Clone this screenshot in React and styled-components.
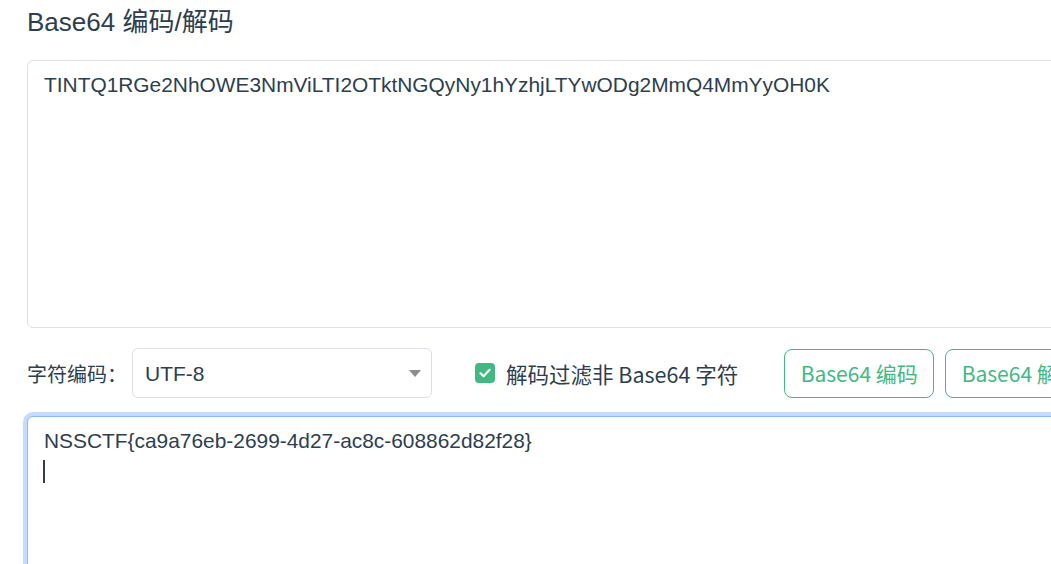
import React, { useState } from "react";
import styled, { createGlobalStyle } from "styled-components";

const GlobalStyle = createGlobalStyle`
  html, body {
    margin: 0;
    padding: 0;
    background: #ffffff;
    overflow: hidden;
  }
  body {
    font-family: "Liberation Sans", Arial, "Noto Sans CJK SC", sans-serif;
    color: #2c3e50;
  }
`;

const INPUT =
  "TINTQ1RGe2NhOWE3NmViLTI2OTktNGQyNy1hYzhjLTYwODg2MmQ4MmYyOH0K";
const OUTPUT = "NSSCTF{ca9a76eb-2699-4d27-ac8c-608862d82f28}\n";

const App = () => {
  const [input, setInput] = useState(INPUT);
  const [output, setOutput] = useState(OUTPUT);
  const [charset, setCharset] = useState("UTF-8");
  const [strict, setStrict] = useState(true);

  return (
    <>
      <GlobalStyle />
      <Page>
        <Title>Base64 编码/解码</Title>
        <TextBox
          value={input}
          onChange={(e) => setInput(e.target.value)}
          spellCheck={false}
        />
        <Toolbar>
          <FieldLabel>字符编码：</FieldLabel>
          <SelectWrap>
            <Select value={charset} onChange={(e) => setCharset(e.target.value)}>
              <option>UTF-8</option>
              <option>GBK</option>
              <option>ISO-8859-1</option>
            </Select>
            <Arrow width="12" height="7" viewBox="0 0 12 7">
              <path d="M0 0h12L6 7z" fill="#8c8c8c" />
            </Arrow>
          </SelectWrap>
          <CheckLabel onClick={() => setStrict(!strict)}>
            <CheckBox $checked={strict}>
              {strict && (
                <svg width="12" height="10" viewBox="0 0 12 10">
                  <path
                    d="M1.5 5.2 4.6 8.2 10.5 1.8"
                    fill="none"
                    stroke="#fff"
                    strokeWidth="2.2"
                    strokeLinecap="round"
                    strokeLinejoin="round"
                  />
                </svg>
              )}
            </CheckBox>
            解码过滤非 Base64 字符
          </CheckLabel>
          <Buttons>
            <OutlineButton>Base64 编码</OutlineButton>
            <OutlineButton>Base64 解码</OutlineButton>
          </Buttons>
        </Toolbar>
        <OutputWrap>
          <TextBox
            $active
            value={output}
            onChange={(e) => setOutput(e.target.value)}
            spellCheck={false}
          />
          {/* caret shown at the end of the focused output */}
          <Caret />
        </OutputWrap>
      </Page>
    </>
  );
};

export default App;

const Page = styled.div`
  width: 1180px;
  padding: 4px 0 0 27px;
  box-sizing: border-box;
`;

const Title = styled.h2`
  margin: 0 0 20px;
  font-size: 26px;
  font-weight: normal;
  line-height: 36px;
  color: #2c3e50;
`;

const TextBox = styled.textarea`
  display: block;
  width: 100%;
  height: 268px;
  box-sizing: border-box;
  margin: 0;
  padding: 8px 16px;
  resize: none;
  font-family: "Liberation Sans", Arial, sans-serif;
  font-size: 20.9px;
  line-height: 31.5px;
  color: #2c3e50;
  background: #fff;
  border: 1px solid ${(p) => (p.$active ? "#8fb8f6" : "#dcdfe6")};
  border-radius: 6px;
  box-shadow: ${(p) => (p.$active ? "0 0 0 4px #c4dbfd" : "none")};
  outline: none;
  caret-color: transparent;
`;

const OutputWrap = styled.div`
  position: relative;
`;

const Caret = styled.span`
  position: absolute;
  left: 16px;
  top: 44px;
  width: 2px;
  height: 23px;
  background: #2c3e50;
`;

const Toolbar = styled.div`
  display: flex;
  align-items: center;
  margin: 20px 0 18px;
  white-space: nowrap;
`;

const FieldLabel = styled.span`
  font-family: "Noto Sans CJK SC", sans-serif;
  font-size: 20px;
  width: 105px;
  color: #2c3e50;
`;

const SelectWrap = styled.div`
  position: relative;
  width: 300px;
  height: 50px;
`;

const Select = styled.select`
  appearance: none;
  width: 100%;
  height: 100%;
  box-sizing: border-box;
  padding: 0 12px;
  font-family: "Liberation Sans", Arial, sans-serif;
  font-size: 21px;
  color: #2c3e50;
  background: #fff;
  border: 1px solid #dcdfe6;
  border-radius: 6px;
  outline: none;
`;

const Arrow = styled.svg`
  position: absolute;
  right: 11px;
  top: 22px;
  pointer-events: none;
`;

const CheckLabel = styled.label`
  display: flex;
  align-items: center;
  gap: 11px;
  margin-left: 43px;
  font-family: "Noto Sans CJK SC", sans-serif;
  font-size: 21.5px;
  color: #2c3e50;
  cursor: pointer;
`;

const CheckBox = styled.span`
  display: inline-flex;
  align-items: center;
  justify-content: center;
  width: 20px;
  height: 20px;
  border-radius: 4px;
  box-sizing: border-box;
  background: ${(p) => (p.$checked ? "#42b983" : "#fff")};
  border: ${(p) => (p.$checked ? "none" : "1px solid #dcdfe6")};
`;

const Buttons = styled.div`
  display: flex;
  gap: 11px;
  margin-left: 46px;
`;

const OutlineButton = styled.button`
  width: 150px;
  height: 49px;
  padding: 0;
  font-family: "Noto Sans CJK SC", sans-serif;
  font-size: 21px;
  color: #42b983;
  background: #fff;
  border: 1px solid #42b983;
  border-radius: 8px;
  cursor: pointer;
`;
